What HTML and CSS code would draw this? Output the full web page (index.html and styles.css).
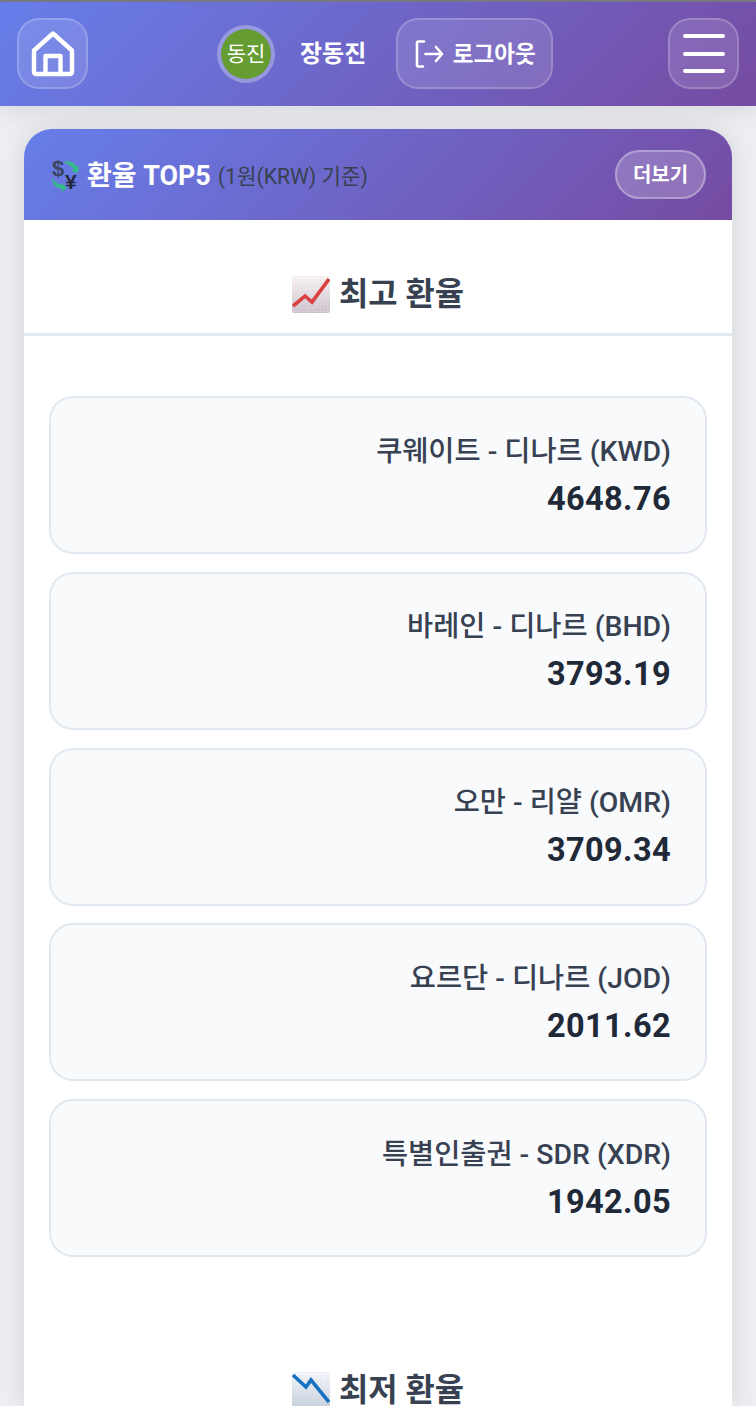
FILE: index.html
```html
<!DOCTYPE html>
<html lang="ko">
<head>
<meta charset="utf-8">
<title>환율 TOP5</title>
<link rel="stylesheet" href="styles.css">
</head>
<body>
<div class="statusline"></div>
<header class="topbar">
  <button class="glass icon-btn" aria-label="홈">
    <svg width="46" height="46" viewBox="0 0 46 46" fill="none" stroke="#fff" stroke-width="4.400" stroke-linejoin="round" stroke-linecap="round"><path d="M4 19.500 23 2.500l19 17v21.500a2 2 0 0 1-2 2H6a2 2 0 0 1-2-2z"/><path d="M15.500 43V25h15v18"/></svg>
  </button>
  <div class="user">
    <span class="avatar">동진</span>
    <span class="username">장동진</span>
    <button class="glass logout">
      <svg width="30" height="30" viewBox="0 0 30 30" fill="none" stroke="#fff" stroke-width="2.600" stroke-linecap="round" stroke-linejoin="round"><path d="M10 2.500H4.500a1.500 1.500 0 0 0-1.500 1.500v22a1.500 1.500 0 0 0 1.500 1.500H9"/><path d="M11.500 15H28M22 8l6 7-6 7"/></svg>
      <span class="logout-text">로그아웃</span>
    </button>
  </div>
  <button class="glass icon-btn menu-btn" aria-label="메뉴">
    <span class="burger"><i></i><i></i><i></i></span>
  </button>
</header>
<main class="card">
  <div class="card-head">
    <h1 class="card-title">
      <svg class="exchange" width="30" height="40" viewBox="0 0 30 40"><path d="M13 7c6-2 11 0 14 5l2-1-1 7-7-2 3-2c-3-3-6-5-11-7z" fill="#35b98a"/><path d="M2 23c0 6 4 10 10 11l0 3 5-4-5-5 0 2c-4-1-7-3-10-7z" fill="#35b98a"/><text x="2" y="21" class="dollar">$</text><text x="15" y="34" class="yen">¥</text></svg>
      <span class="title-main">환율 TOP5</span>
      <small class="title-sub">(1원(KRW) 기준)</small>
    </h1>
    <button class="more">더보기</button>
  </div>

  <section class="section">
    <h2 class="section-title">
      <svg width="38" height="37" viewBox="0 0 38 37"><defs><linearGradient id="g1" x1="0" y1="0" x2="0" y2="1"><stop offset="0" stop-color="#fbf8f8"/><stop offset="1" stop-color="#c9bfca"/></linearGradient><pattern id="p1" width="3.500" height="3.500" patternUnits="userSpaceOnUse"><path d="M3.500 0H0V3.500" fill="none" stroke="#ead9dd" stroke-width=".6"/></pattern></defs><rect width="38" height="37" rx="2" fill="url(#g1)"/><rect width="38" height="37" rx="2" fill="url(#p1)"/><path d="M1 30 L13 20 L20 26 L37 3" fill="none" stroke="#d9403f" stroke-width="3.600"/></svg>
      <span class="section-text">최고 환율</span>
    </h2>
    <ul class="rates">
      <li class="rate"><span class="rate-name">쿠웨이트 - 디나르 (KWD)</span><strong class="rate-value">4648.76</strong></li>
      <li class="rate"><span class="rate-name">바레인 - 디나르 (BHD)</span><strong class="rate-value">3793.19</strong></li>
      <li class="rate"><span class="rate-name">오만 - 리얄 (OMR)</span><strong class="rate-value">3709.34</strong></li>
      <li class="rate"><span class="rate-name">요르단 - 디나르 (JOD)</span><strong class="rate-value">2011.62</strong></li>
      <li class="rate"><span class="rate-name">특별인출권 - SDR (XDR)</span><strong class="rate-value">1942.05</strong></li>
    </ul>
  </section>

  <section class="section low">
    <h2 class="section-title">
      <svg width="38" height="37" viewBox="0 0 38 37"><defs><linearGradient id="g2" x1="0" y1="0" x2="0" y2="1"><stop offset="0" stop-color="#f8fafc"/><stop offset="1" stop-color="#c3cbd9"/></linearGradient><pattern id="p2" width="3.500" height="3.500" patternUnits="userSpaceOnUse"><path d="M3.500 0H0V3.500" fill="none" stroke="#d8e0ea" stroke-width=".6"/></pattern></defs><rect width="38" height="37" rx="2" fill="url(#g2)"/><rect width="38" height="37" rx="2" fill="url(#p2)"/><path d="M1 3 L14 15 L19 8 L37 30" fill="none" stroke="#1a72c4" stroke-width="3.600"/></svg>
      <span class="section-text">최저 환율</span>
    </h2>
  </section>
</main>
</body>
</html>
```
FILE: styles.css
```css
* { box-sizing: border-box; }
html, body { margin: 0; padding: 0; height: 1406px; overflow: hidden; }
body {
  background: #eceef2;
  font-family: Roboto, "Noto Sans CJK KR", sans-serif;
  color: #1f2937;
}
.statusline { height: 2px; background: #7c7c88; }
.topbar {
  height: 104px;
  padding: 16px 17px 0;
  display: flex;
  align-items: flex-start;
  background: linear-gradient(135deg, #667eea 0%, #764ba2 100%);
  box-shadow: 0 4px 22px rgba(0, 0, 0, .1);
  position: relative;
}
.glass {
  border: 2px solid rgba(255, 255, 255, .2);
  background: rgba(255, 255, 255, .12);
  color: #fff;
  font-family: inherit;
  display: flex;
  align-items: center;
  justify-content: center;
  padding: 0;
}
.icon-btn { width: 71px; height: 71px; border-radius: 22px; flex: none; }
.menu-btn { margin-left: auto; }
.user { display: flex; align-items: center; height: 71px; margin-left: 129px; }
.avatar {
  width: 58px;
  height: 58px;
  border-radius: 50%;
  border: 4px solid rgba(255, 255, 255, .3);
  background: #659d32;
  background-clip: padding-box;
  color: #fff;
  font-size: 21px;
  padding-bottom: 3px;
  display: flex;
  align-items: center;
  justify-content: center;
  flex: none;
}
.username { margin-left: 25px; padding-bottom: 4px; color: #fff; font-size: 24px; font-weight: 700; white-space: nowrap; }
.logout {
  margin-left: 30px;
  width: 157px;
  height: 71px;
  border-radius: 22px;
  gap: 9px;
  font-size: 22.500px;
  font-weight: 700;
  flex: none;
}
.logout-text { padding-bottom: 4px; }
.burger { display: flex; flex-direction: column; gap: 13.500px; width: 42px; }
.burger i { display: block; height: 4px; border-radius: 2px; background: #fff; }
.card {
  margin: 23px 24px 0;
  height: 1277px;
  background: #fff;
  border-radius: 28px 28px 0 0;
  box-shadow: 0 0 24px rgba(0, 0, 0, .11);
  overflow: hidden;
}
.card-head {
  height: 91px;
  padding: 0 26px;
  display: flex;
  align-items: center;
  justify-content: space-between;
  background: linear-gradient(135deg, #667eea 0%, #764ba2 100%);
}
.card-title { margin: 0; display: flex; align-items: center; color: #fff; font-size: 26.900px; font-weight: 700; line-height: 1; }
.exchange { margin-right: 7px; margin-top: -8px; margin-bottom: -8px; }
.title-main { padding-top: 4px; }
.dollar { font: 700 22px "Liberation Sans", sans-serif; fill: #3b4460; }
.yen { font: 700 21px "Liberation Sans", sans-serif; fill: #232838; }
.title-sub { margin-left: 7px; padding-top: 4px; color: #374151; font-size: 21.200px; font-weight: 400; }
.more {
  width: 91px;
  height: 49px;
  border: 2px solid rgba(255, 255, 255, .3);
  border-radius: 25px;
  background: rgba(255, 255, 255, .2);
  color: #fff;
  font-family: inherit;
  font-size: 20px;
  font-weight: 700;
  padding: 0 0 2px;
}
.section-title {
  margin: 0;
  height: 116px;
  padding-top: 56px;
  display: flex;
  align-items: flex-start;
  justify-content: center;
  gap: 9px;
  color: #374151;
  font-size: 31.800px;
  font-weight: 700;
  line-height: 34px;
  border-bottom: 3px solid #e2e8f0;
}
.section-text { margin-top: 1px; }
.rates { list-style: none; margin: 0; padding: 60px 25px 0; display: flex; flex-direction: column; gap: 17.750px; }
.rate {
  height: 158px;
  border: 2px solid #e2e8f0;
  border-radius: 24px;
  background: #f8fafc;
  padding: 1px 34px 0;
  display: flex;
  flex-direction: column;
  align-items: flex-end;
  justify-content: center;
  gap: 6px;
}
.rate-name { color: #374151; font-size: 28.400px; font-weight: 500; line-height: 40px; white-space: nowrap; }
.rate-value { color: #1f2937; font-size: 32.500px; font-weight: 700; line-height: 42px; letter-spacing: .4px; }
.low { margin-top: 59px; }
.low .section-title { height: 90px; border-bottom: 0; }
```
